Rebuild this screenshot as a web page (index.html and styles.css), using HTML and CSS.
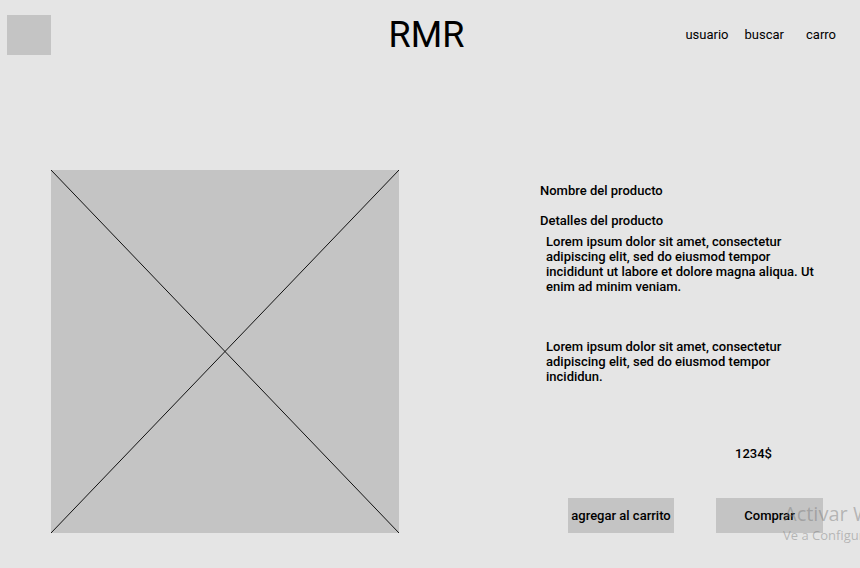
FILE: index.html
```html
<!DOCTYPE html>
<html lang="es">
<head>
    <meta charset="UTF-8">
    <meta name="viewport" content="width=device-width, initial-scale=1.0">
    <title>RMR - Producto</title>
    <link rel="stylesheet" href="styles.css">
</head>
<body>
    <header class="topbar">
        <div class="logo"></div>
        <h1 class="brand">RMR</h1>
        <nav class="nav">
            <a href="#" class="nav-user">usuario</a>
            <a href="#" class="nav-search">buscar</a>
            <a href="#" class="nav-cart">carro</a>
        </nav>
    </header>

    <main class="product">
        <div class="product-image">
            <svg viewBox="0 0 348 363" preserveAspectRatio="none">
                <line x1="0" y1="0" x2="348" y2="363"></line>
                <line x1="348" y1="0" x2="0" y2="363"></line>
            </svg>
        </div>

        <section class="product-info">
            <h2 class="product-name">Nombre del producto</h2>
            <h3 class="product-details">Detalles del producto</h3>
            <p class="desc">Lorem ipsum dolor sit amet, consectetur adipiscing elit, sed do eiusmod tempor incididunt ut labore et dolore magna aliqua. Ut enim ad minim veniam.</p>
            <p class="desc desc-second">Lorem ipsum dolor sit amet, consectetur adipiscing elit, sed do eiusmod tempor incididun.</p>
            <div class="price">1234$</div>
            <div class="actions">
                <button class="btn btn-cart">agregar al carrito</button>
                <button class="btn btn-buy">Comprar</button>
            </div>
        </section>
    </main>

    <div class="watermark">
        <div class="wm-title">Activar Windows</div>
        <div class="wm-sub">Ve a Configuración para activar Windows.</div>
    </div>
</body>
</html>
```

FILE: styles.css
```css
body {
    margin: 0;
    width: 860px;
    height: 568px;
    overflow: hidden;
    position: relative;
    background-color: #e5e5e5;
    color: #000000;
    font-family: Roboto, "Liberation Sans", sans-serif;
}

.topbar {
    display: grid;
    grid-template-columns: 1fr auto 1fr;
    align-items: center;
    padding: 15px 24px 0 7px;
    height: 40px;
}

.logo {
    width: 44px;
    height: 40px;
    background-color: #c4c4c4;
}

.brand {
    margin: 0 0 0 10px;
    font-size: 36px;
    font-weight: 400;
    line-height: 40px;
}

.nav {
    display: flex;
    justify-content: flex-end;
    margin-top: -2px;
}

.nav a {
    color: #000000;
    text-decoration: none;
    font-size: 13px;
}

.nav-search {
    margin-left: 16px;
}

.nav-cart {
    margin-left: 22px;
}

.product {
    display: flex;
    margin-top: 115px;
    padding-left: 51px;
}

.product-image {
    width: 348px;
    height: 363px;
    background-color: #c4c4c4;
    flex-shrink: 0;
}

.product-image svg {
    display: block;
    width: 100%;
    height: 100%;
}

.product-image line {
    stroke: #111111;
    stroke-width: 1;
}

.product-info {
    margin-left: 141px;
    padding-top: 13px;
    font-size: 13px;
    line-height: 15px;
    font-weight: 500;
}

.product-name,
.product-details {
    margin: 0;
    font-size: 13px;
    font-weight: 500;
}

.product-details {
    margin-top: 15px;
}

.desc {
    width: 278px;
    margin: 6px 0 0 6px;
}

.desc-second {
    margin-top: 45px;
}

.price {
    margin: 62px 0 0 195px;
}

.actions {
    display: flex;
    margin: 37px 0 0 28px;
}

.btn {
    height: 35px;
    border: none;
    padding: 0;
    background-color: #c4c4c4;
    color: #000000;
    font-family: Roboto, "Liberation Sans", sans-serif;
    font-size: 13px;
    font-weight: 500;
    cursor: pointer;
}

.btn-cart {
    width: 106px;
}

.btn-buy {
    width: 107px;
    margin-left: 42px;
}

.watermark {
    position: absolute;
    left: 783px;
    top: 502px;
    white-space: nowrap;
    color: rgba(120, 120, 120, 0.45);
    font-family: "Open Sans", sans-serif;
    pointer-events: none;
}

.wm-title {
    font-size: 20px;
    line-height: 24px;
    margin-left: 1px;
}

.wm-sub {
    font-size: 13px;
    line-height: 18px;
}
```
